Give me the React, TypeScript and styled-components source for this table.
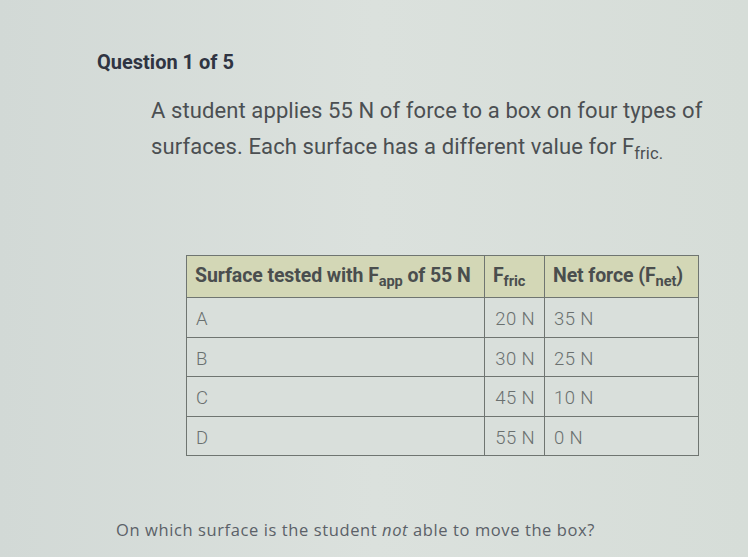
import styled, { createGlobalStyle } from "styled-components";

const GlobalStyle = createGlobalStyle`
  html, body {
    margin: 0;
    padding: 0;
    background: #d5dbd7;
  }
  body {
    font-family: Roboto, "Liberation Sans", sans-serif;
  }
`;

const Page = styled.div`
  width: 748px;
  height: 557px;
  overflow: hidden;
  background: linear-gradient(90deg, #d2d9d6 0%, #dbe1dd 50%, #d6ddd8 100%);
  padding: 47px 0 0 97px;
  box-sizing: border-box;
`;

const Heading = styled.h2`
  margin: 0;
  font-size: 20px;
  font-weight: 700;
  color: #2f3442;
  line-height: 30px;
`;

const Prompt = styled.p`
  margin: 16px 0 0 54px;
  width: 580px;
  font-size: 22px;
  letter-spacing: 0.1px;
  line-height: 36px;
  color: #4b4f52;
`;

const Table = styled.table`
  margin: 88px 0 0 89px;
  border-collapse: collapse;
  width: 513px;

  th,
  td {
    border: 1px solid #6f7571;
    text-align: left;
    box-sizing: border-box;
    white-space: nowrap;
  }
`;

const HeadCell = styled.th<{ $w?: number }>`
  width: ${(p) => (p.$w ? `${p.$w}px` : "auto")};
  height: 42px;
  padding: 0 8px 2px;
  background: #d3d7b6;
  color: #4a4e4e;
  font-weight: 700;
  font-size: 19.5px;
  letter-spacing: -0.1px;
`;

const Cell = styled.td<{ $right?: boolean }>`
  height: 39.5px;
  padding: 4px 9px 0;
  font-size: 18.5px;
  font-weight: 300;
  letter-spacing: 0.4px;
  color: #6a706f;
  background: #d9dfdb;
  text-align: ${(p) => (p.$right ? "right" : "left")} !important;
`;

const Sub = styled.span`
  display: inline-block;
  font-size: 0.75em;
  transform: translateY(0.3em);
`;

const Footer = styled.p`
  margin: 62px 0 0 19px;
  font-family: "Open Sans", Roboto, sans-serif;
  font-size: 16.5px;
  color: #5b6168;
  letter-spacing: 0.6px;
`;

const rows = [
  { s: "A", f: "20 N", n: "35 N" },
  { s: "B", f: "30 N", n: "25 N" },
  { s: "C", f: "45 N", n: "10 N" },
  { s: "D", f: "55 N", n: "0 N" },
];

export default function App() {
  return (
    <Page>
      <GlobalStyle />
      <Heading>Question 1 of 5</Heading>
      <Prompt>
        A student applies 55 N of force to a box on four types of surfaces.
        Each surface has a different value for F<Sub>fric.</Sub>
      </Prompt>
      <Table>
        <thead>
          <tr>
            <HeadCell $w={298}>
              Surface tested with F<Sub>app</Sub> of 55 N
            </HeadCell>
            <HeadCell $w={60}>
              F<Sub>fric</Sub>
            </HeadCell>
            <HeadCell>
              Net force (F<Sub>net</Sub>)
            </HeadCell>
          </tr>
        </thead>
        <tbody>
          {rows.map((r) => (
            <tr key={r.s}>
              <Cell>{r.s}</Cell>
              <Cell $right>{r.f}</Cell>
              <Cell>{r.n}</Cell>
            </tr>
          ))}
        </tbody>
      </Table>
      <Footer>
        On which surface is the student <i>not</i> able to move the box?
      </Footer>
    </Page>
  );
}
